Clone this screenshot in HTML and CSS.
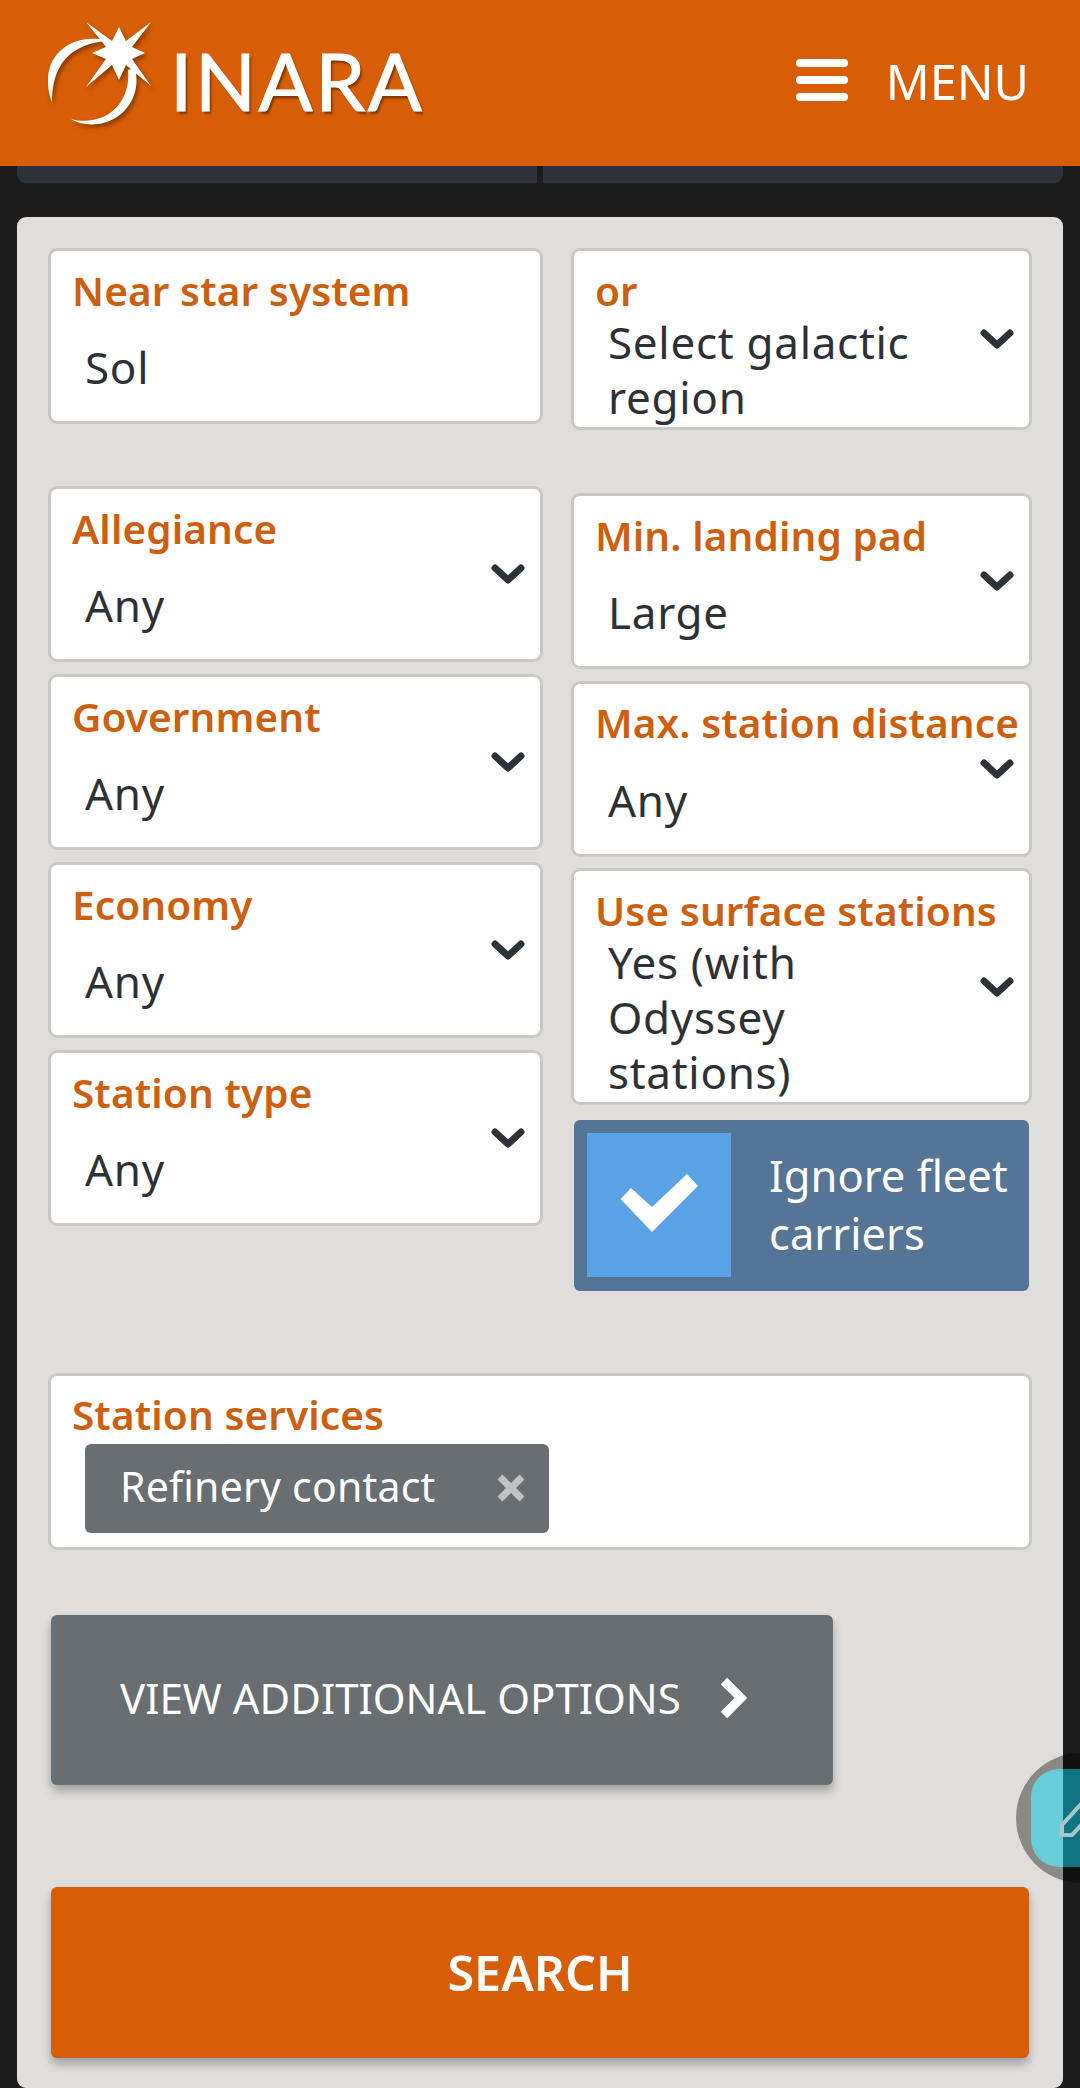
FILE: index.html
```html
<!DOCTYPE html>
<html lang="en">
<head>
<meta charset="utf-8">
<title>INARA</title>
<link rel="stylesheet" href="styles.css">
</head>
<body>
<header class="topbar">
  <a class="brand">
    <svg class="brand-mark" viewBox="0 0 120 110" aria-hidden="true">
      <path class="mark" d="M41 2 L67 21 L74 7 L81 21 L106 2 L87 27 L100 33 L87 39 L106 66 L81 45 L74 60 L67 45 L41 67 L61 39 L47 33 L61 27 Z"/>
      <path class="mark" d="M55 19 C25 16 2 34 3 62 C3 70 5 78 7 82 C7 46 24 25 60 21 Z"/>
      <path class="mark" d="M90 48 C96 72 84 96 58 103 C46 106 34 104 26 99 C36 102 48 101 58 97 C76 89 85 70 83 50 Z"/>
    </svg>
    <span class="brand-name">INARA</span>
  </a>
  <a class="menu-toggle">
    <span class="burger"><i></i><i></i><i></i></span>
    <span class="menu-label">MENU</span>
  </a>
</header>

<div class="stub-row"><div class="stub"></div><div class="stub"></div></div>

<main class="panel">
  <div class="columns">
    <div class="col col-left">
      <div class="group">
        <div class="field field-plain">
          <label class="label">Near star system</label>
          <div class="value">Sol</div>
        </div>
      </div>
      <div class="group stack stack-left">
        <div class="field">
          <label class="label">Allegiance</label>
          <div class="value">Any</div>
          <svg class="chev" viewBox="0 0 34 22"><path d="M4 5 L17 17 L30 5"/></svg>
        </div>
        <div class="field">
          <label class="label">Government</label>
          <div class="value">Any</div>
          <svg class="chev" viewBox="0 0 34 22"><path d="M4 5 L17 17 L30 5"/></svg>
        </div>
        <div class="field">
          <label class="label">Economy</label>
          <div class="value">Any</div>
          <svg class="chev" viewBox="0 0 34 22"><path d="M4 5 L17 17 L30 5"/></svg>
        </div>
        <div class="field">
          <label class="label">Station type</label>
          <div class="value">Any</div>
          <svg class="chev" viewBox="0 0 34 22"><path d="M4 5 L17 17 L30 5"/></svg>
        </div>
      </div>
    </div>
    <div class="col col-right">
      <div class="group">
        <div class="field field-multi">
          <label class="label">or</label>
          <div class="value">Select galactic<br>region</div>
          <svg class="chev" viewBox="0 0 34 22"><path d="M4 5 L17 17 L30 5"/></svg>
        </div>
      </div>
      <div class="group stack stack-right">
        <div class="field">
          <label class="label">Min. landing pad</label>
          <div class="value">Large</div>
          <svg class="chev" viewBox="0 0 34 22"><path d="M4 5 L17 17 L30 5"/></svg>
        </div>
        <div class="field">
          <label class="label">Max. station distance</label>
          <div class="value">Any</div>
          <svg class="chev" viewBox="0 0 34 22"><path d="M4 5 L17 17 L30 5"/></svg>
        </div>
        <div class="field field-multi">
          <label class="label">Use surface stations</label>
          <div class="value">Yes (with<br>Odyssey<br>stations)</div>
          <svg class="chev" viewBox="0 0 34 22"><path d="M4 5 L17 17 L30 5"/></svg>
        </div>
        <div class="checkbox">
          <span class="check-box">
            <svg viewBox="0 0 78 60"><path d="M0.5 26 L11 15 L32 34 L67 1 L78 13 L32 59 Z"/></svg>
          </span>
          <span class="check-label">Ignore fleet<br>carriers</span>
        </div>
      </div>
    </div>
  </div>

  <div class="field field-services">
    <label class="label">Station services</label>
    <div class="tag">
      <span class="tag-text">Refinery contact</span>
      <svg class="tag-x" viewBox="0 0 28 28"><path d="M3 3 L25 25 M25 3 L3 25"/></svg>
    </div>
  </div>

  <button class="btn btn-more">
    <span>VIEW ADDITIONAL OPTIONS</span>
    <svg class="btn-chev" viewBox="0 0 28 42"><path d="M5 4 L22 21 L5 38"/></svg>
  </button>
  <button class="btn btn-search">SEARCH</button>
</main>

<div class="fab">
  <div class="fab-tile">
    <svg class="fab-pen" viewBox="0 0 40 40"><path d="M2 25 L2 35 L12 35 L32 13 L22 3 Z"/></svg>
  </div>
</div>
</body>
</html>
```
FILE: styles.css
```css
* { box-sizing: border-box; }
html, body { margin: 0; padding: 0; }
body {
  width: 1080px;
  height: 2088px;
  overflow: hidden;
  position: relative;
  background: #1c1c1c;
  font-family: "Noto Sans", "Open Sans", sans-serif;
  color: #2d3136;
}
.topbar {
  height: 166px;
  background: #d75d06;
  display: flex;
  align-items: flex-start;
  justify-content: space-between;
  color: #fff;
}
.brand { display: flex; align-items: flex-start; margin-left: 45px; }
.brand-mark {
  width: 120px;
  height: 110px;
  margin-top: 20px;
  filter: drop-shadow(2px 3px 2px rgba(70, 30, 0, .55));
}
.mark { fill: #fff; }
.brand-name {
  font-family: "Lato", sans-serif;
  font-size: 80px;
  line-height: 98px;
  margin: 31px 0 0 5px;
  letter-spacing: 2.5px;
  -webkit-text-stroke: 1px #fff;
  text-shadow: 2px 3px 2px rgba(70, 30, 0, .6);
}
.menu-toggle { display: flex; align-items: flex-start; margin-right: 51px; }
.burger {
  width: 52px;
  margin-top: 59px;
  display: flex;
  flex-direction: column;
  gap: 9.5px;
}
.burger i { display: block; height: 7.5px; border-radius: 4px; background: #fff; }
.menu-label {
  font-size: 48.5px;
  font-weight: 400;
  line-height: 60px;
  margin: 51px 0 0 38px;
}
.stub-row { display: flex; gap: 6px; margin: 0 17px; }
.stub { flex: 1; height: 17px; background: #2d3339; }
.stub:first-child { border-bottom-left-radius: 9px; }
.stub:last-child { border-bottom-right-radius: 9px; }
.panel {
  margin: 34px 17px 0;
  height: 1871px;
  padding: 31px 31px 0;
  background: #dfdedc;
  border-radius: 9px;
}
.columns { display: flex; gap: 28px; align-items: flex-start; }
.col-left { width: 495px; }
.col-right { width: 461px; }
.group + .group { margin-top: 62px; }
.stack { display: flex; flex-direction: column; }
.stack-left { gap: 12px; }
.group + .stack-right { gap: 11.5px; margin-top: 63.3px; }
.field {
  position: relative;
  height: 176px;
  background: #fff;
  border: 3px solid #c8c8c6;
  border-radius: 9px;
  overflow: hidden;
}
.label {
  display: block;
  padding: 13.5px 0 0 21px;
  font-size: 40.5px;
  font-weight: 600;
  line-height: 52px;
  letter-spacing: .1px;
  color: #cc5f10;
  white-space: nowrap;
}
.value {
  padding: 23.5px 0 0 34px;
  font-size: 44px;
  letter-spacing: .7px;
  line-height: 55px;
}
.field-multi { height: auto; padding-bottom: 2px; }
.field-multi .value { padding-top: 0; margin-top: -1.5px; }
.chev {
  position: absolute;
  right: 15px;
  top: 50%;
  width: 34px;
  height: 22px;
  transform: translateY(-50%);
}
.chev path { fill: none; stroke: #2d3339; stroke-width: 7; stroke-linejoin: round; stroke-linecap: round; }
.checkbox {
  height: 171px;
  margin: 3px 3px 0;
  padding: 13px;
  display: flex;
  align-items: center;
  border-radius: 6px;
  background: #547596;
  color: #fff;
}
.check-box {
  width: 144px;
  height: 144px;
  flex: none;
  display: flex;
  align-items: center;
  justify-content: center;
  background: #5aa2e6;
}
.check-box svg { width: 78px; height: 60px; margin-bottom: 4px; }
.check-box path { fill: #fff; }
.check-label { margin-left: 38px; font-size: 43.5px; line-height: 58px; margin-top: -2px; }
.field-services { height: 177px; margin-top: 82px; }
.tag {
  width: 464px;
  height: 89px;
  margin: 2.5px 0 0 34px;
  padding: 0 24px 0 35px;
  display: flex;
  align-items: center;
  justify-content: space-between;
  border-radius: 6px;
  background: #686e71;
  color: #fff;
}
.tag-text { font-size: 41px; letter-spacing: .2px; line-height: 56px; margin-top: -5px; }
.tag-x { width: 28px; height: 28px; }
.tag-x path { fill: none; stroke: #bfc3c6; stroke-width: 7; }
.btn {
  display: flex;
  align-items: center;
  border: 0;
  border-radius: 6px;
  color: #fff;
  font-family: inherit;
  box-shadow: 0 6px 10px rgba(0, 0, 0, .28);
}
.btn-more {
  width: 782px;
  height: 170px;
  margin: 65px 0 0 3px;
  padding: 0 0 4px 69px;
  background: #686e71;
  font-size: 42px;
  font-weight: 400;
}
.btn-chev { width: 28px; height: 42px; margin-left: 38px; }
.btn-chev path { fill: none; stroke: #fff; stroke-width: 9; }
.btn-search {
  width: 978px;
  height: 171px;
  margin: 102px 0 0 3px;
  padding-bottom: 2px;
  justify-content: center;
  background: #d75d06;
  font-size: 48.5px;
  font-weight: 600;
}
.fab {
  position: absolute;
  left: 1016px;
  top: 1753px;
  width: 130px;
  height: 130px;
  border-radius: 50%;
  background: rgba(0, 0, 0, .38);
}
.fab-tile {
  position: absolute;
  left: 15px;
  top: 16px;
  width: 100px;
  height: 98px;
  border-radius: 28px;
  background: linear-gradient(90deg, #66cdd9 0 32px, #10757f 32px);
}
.fab-pen { position: absolute; left: 29px; top: 31px; width: 40px; height: 40px; }
.fab-pen path { fill: none; stroke: #a9c6ca; stroke-width: 4; }
```
